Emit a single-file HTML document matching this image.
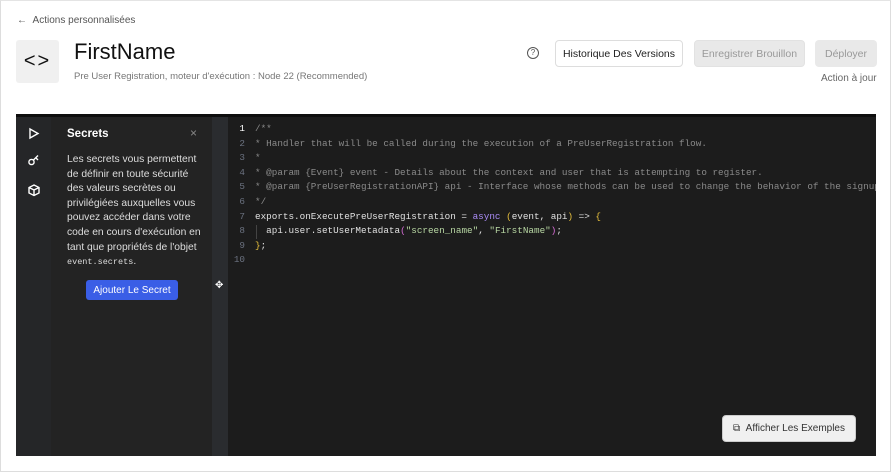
<!DOCTYPE html>
<html><head><meta charset="utf-8"><style>
*{box-sizing:border-box;margin:0;padding:0}
body{width:894px;height:473px;background:#fff;font-family:"Liberation Sans",sans-serif;position:relative;overflow:hidden}
.frame{position:absolute;left:0;top:0;width:891px;height:472px;border:1px solid #ddd;border-top:1px solid #e4e4e4}
.abs{position:absolute}
.btn{position:absolute;height:27px;border-radius:4px;font-size:10.5px;display:flex;align-items:center;justify-content:center}
.ed{position:absolute;left:16px;top:114px;width:860px;height:342px;background:#1c1c1c;border-top:3px solid #0e0e0e;overflow:hidden}
.code{position:absolute;left:239px;top:5px;font-family:"Liberation Mono",monospace;font-size:9.3px;line-height:14.6px;color:#e0e0e0;white-space:pre}
.ln{position:absolute;left:212px;top:5px;width:17px;text-align:right;font-family:"Liberation Mono",monospace;font-size:9.3px;line-height:14.6px;color:#6b7280;white-space:pre}
.c{color:#8a8a8a}.k{color:#a98bf5}.y{color:#e8c13d}.s{color:#b8d7a3}.m{color:#d66cd6}
</style></head><body>
<div class="frame"></div>
<div class="abs" style="left:17px;top:15px;font-size:10px;color:#555">←&nbsp;&nbsp;Actions personnalisées</div>
<div class="abs" style="left:16px;top:40px;width:43px;height:43px;background:#f0f0f0;border-radius:3px;font-size:20px;color:#111;display:flex;align-items:center;justify-content:center;letter-spacing:2px">&lt;&gt;</div>
<div class="abs" style="left:74px;top:39px;font-size:22px;color:#111">FirstName</div>
<div class="abs" style="left:74px;top:71px;font-size:9.5px;color:#777">Pre User Registration, moteur d'exécution : Node 22 (Recommended)</div>
<div class="abs" style="left:527px;top:47px;width:12px;height:12px;border:1px solid #555;border-radius:50%;font-size:8px;text-align:center;line-height:10px;color:#555">?</div>
<div class="btn" style="left:555px;top:40px;width:128px;border:1px solid #ddd;color:#222">Historique Des Versions</div>
<div class="btn" style="left:694px;top:40px;width:111px;background:#e9e9e9;border:1px solid #e2e2e2;color:#999">Enregistrer Brouillon</div>
<div class="btn" style="left:815px;top:40px;width:62px;background:#e9e9e9;color:#999">Déployer</div>
<div class="abs" style="left:821px;top:73px;font-size:10px;color:#666">Action à jour</div>
<div class="ed">
 <div class="abs" style="left:0;top:0;width:35px;height:339px;background:#252628"></div>
 <div class="abs" style="left:35px;top:0;width:161px;height:339px;background:#232323"></div>
 <div class="abs" style="left:196px;top:0;width:16px;height:339px;background:#2a2c2f"></div>
 <svg class="abs" style="left:12px;top:10px" width="12" height="90" viewBox="0 0 12 90" fill="none" stroke="#fff" stroke-width="1.4">
  <path d="M2 2 L10 6.5 L2 11 Z"/>
  <circle cx="3.5" cy="35" r="2.6"/><path d="M5.5 33 L10 28.5 M8 31 L10 33"/>
  <path d="M6 58 L11 60.5 L11 66 L6 68.5 L1 66 L1 60.5 Z M1 60.5 L6 63 L11 60.5 M6 63 L6 68.5"/>
 </svg>
 <div class="abs" style="left:51px;top:11px;font-size:11.5px;color:#fff;font-weight:bold">Secrets</div>
 <div class="abs" style="left:174px;top:9px;font-size:12px;color:#888">×</div>
 <div class="abs" style="left:51px;top:36px;width:136px;font-size:10.3px;line-height:14.6px;color:#ddd">Les secrets vous permettent de définir en toute sécurité des valeurs secrètes ou privilégiées auxquelles vous pouvez accéder dans votre code en cours d'exécution en tant que propriétés de l'objet <span style="font-family:'Liberation Mono',monospace;font-size:8.5px">event.secrets</span>.</div>
 <div class="abs" style="left:70px;top:163px;width:92px;height:20px;background:#3a5ee6;border-radius:3px;color:#fff;font-size:10px;display:flex;align-items:center;justify-content:center">Ajouter Le Secret</div>
 <div class="abs" style="left:199px;top:163px;color:#fff;font-size:10px">✥</div>
 <div class="ln"><span style="color:#fff">1</span>
2
3
4
5
6
7
8
9
10</div>
 <div class="code"><span class="c">/**
* Handler that will be called during the execution of a PreUserRegistration flow.
*
* @param {Event} event - Details about the context and user that is attempting to register.
* @param {PreUserRegistrationAPI} api - Interface whose methods can be used to change the behavior of the signup.
*/</span>
exports.onExecutePreUserRegistration = <span class="k">async</span> <span class="y">(</span>event, api<span class="y">)</span> =&gt; <span class="y">{</span>
  api.user.setUserMetadata<span class="m">(</span><span class="s">"screen_name"</span>, <span class="s">"FirstName"</span><span class="m">)</span>;
<span class="y">}</span>;</div>
 <div class="abs" style="left:240px;top:108px;width:1px;height:14px;background:#444"></div>
 <div class="btn" style="left:706px;top:298px;width:134px;height:27px;background:#f0f0f0;border:1px solid #ccc;color:#333;font-size:10px">⧉&nbsp;&nbsp;Afficher Les Exemples</div>
</div>
</body></html>
